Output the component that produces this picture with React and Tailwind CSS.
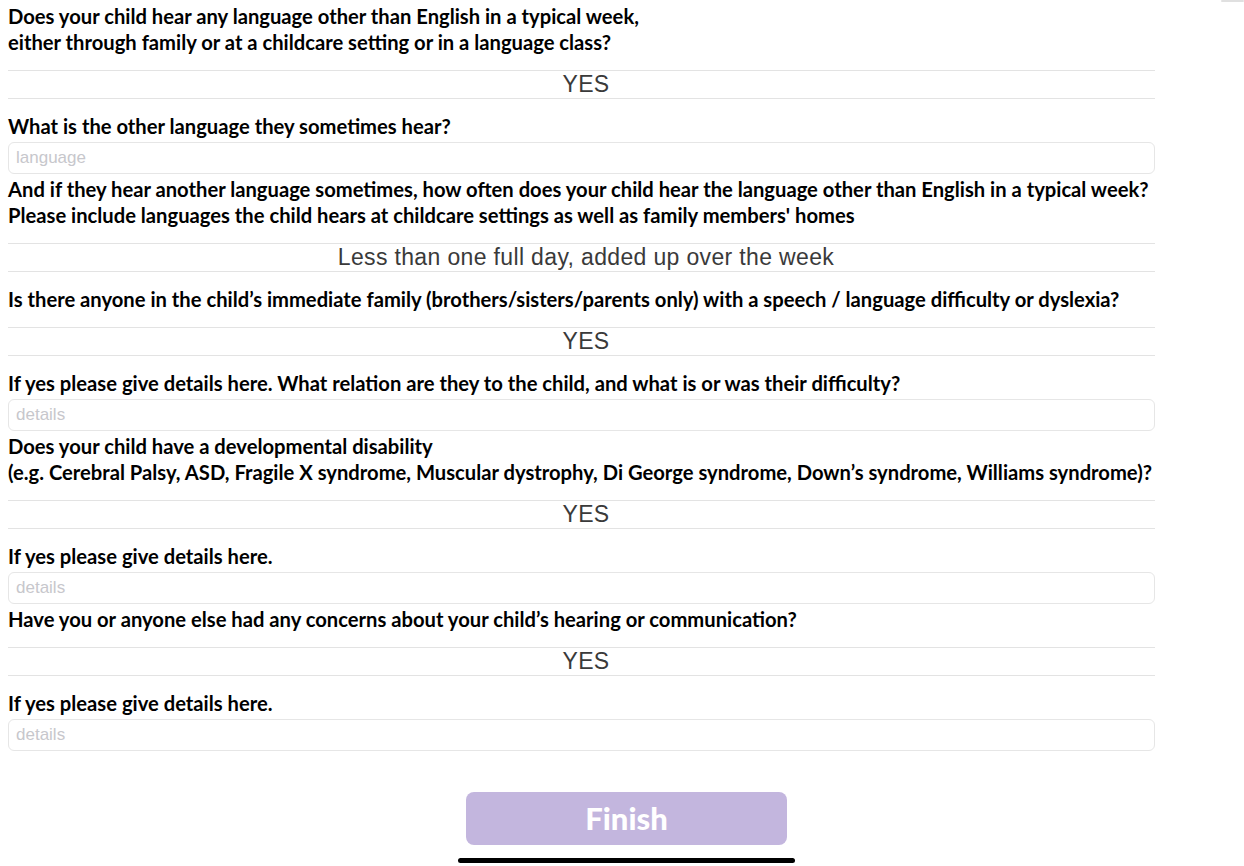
import React from "react";

const titleCls =
  "text-[20.2px] leading-[26px] font-bold text-black whitespace-nowrap [font-family:Lato,'Noto_Sans',sans-serif]";

function Title({ lines }) {
  return (
    <div className={titleCls}>
      {lines.map((l, i) => (
        <div key={i}>{l}</div>
      ))}
    </div>
  );
}

function Picker({ value }) {
  return (
    <div className="mt-[15px] mb-[14px] h-[29px] border-y border-[#e3e3e3] flex items-center justify-center pl-[9px] text-[23px] tracking-[0.35px] text-[#3a3a3a] [font-family:'Liberation_Sans',Arial,sans-serif]">
      {value}
    </div>
  );
}

function Field({ placeholder }) {
  return (
    <div className="mt-[3px] mb-[2px] h-[32px] rounded-[6px] border border-[#e6e6e6] flex items-center px-[7px] text-[17px] text-[#c7c7cc] [font-family:'Liberation_Sans',Arial,sans-serif]">
      {placeholder}
    </div>
  );
}

export default function App() {
  return (
    <div className="relative w-[1244px] h-[866px] bg-white overflow-hidden">
      <div className="absolute right-0 top-0 w-[23px] h-[2px] rounded-full bg-[#e0e0e0]" />
      <div className="w-[1147px] ml-[8px] pt-[3px] flex flex-col">
        <Title
          lines={[
            "Does your child hear any language other than English in a typical week,",
            "either through family or at a childcare setting or in a language class?",
          ]}
        />
        <Picker value="YES" />
        <Title lines={["What is the other language they sometimes hear?"]} />
        <Field placeholder="language" />
        <Title
          lines={[
            "And if they hear another language sometimes, how often does your child hear the language other than English in a typical week?",
            "Please include languages the child hears at childcare settings as well as family members' homes",
          ]}
        />
        <Picker value="Less than one full day, added up over the week" />
        <Title
          lines={[
            "Is there anyone in the child\u2019s immediate family (brothers/sisters/parents only) with a speech / language difficulty or dyslexia?",
          ]}
        />
        <Picker value="YES" />
        <Title
          lines={[
            "If yes please give details here. What relation are they to the child, and what is or was their difficulty?",
          ]}
        />
        <Field placeholder="details" />
        <Title
          lines={[
            "Does your child have a developmental disability",
            "(e.g. Cerebral Palsy, ASD, Fragile X syndrome, Muscular dystrophy, Di George syndrome, Down\u2019s syndrome, Williams syndrome)?",
          ]}
        />
        <Picker value="YES" />
        <Title lines={["If yes please give details here."]} />
        <Field placeholder="details" />
        <Title
          lines={[
            "Have you or anyone else had any concerns about your child\u2019s hearing or communication?",
          ]}
        />
        <Picker value="YES" />
        <Title lines={["If yes please give details here."]} />
        <Field placeholder="details" />
        <div className="mt-[39px] flex">
          <button className="ml-[458px] w-[321px] h-[53px] rounded-[8px] bg-[#c3b6de] text-white text-[31px] font-black [font-family:Lato,sans-serif]">
            Finish
          </button>
        </div>
        <div className="mt-[13px] flex">
          <div className="ml-[450px] w-[337px] h-[5px] rounded-full bg-black" />
        </div>
      </div>
    </div>
  );
}
